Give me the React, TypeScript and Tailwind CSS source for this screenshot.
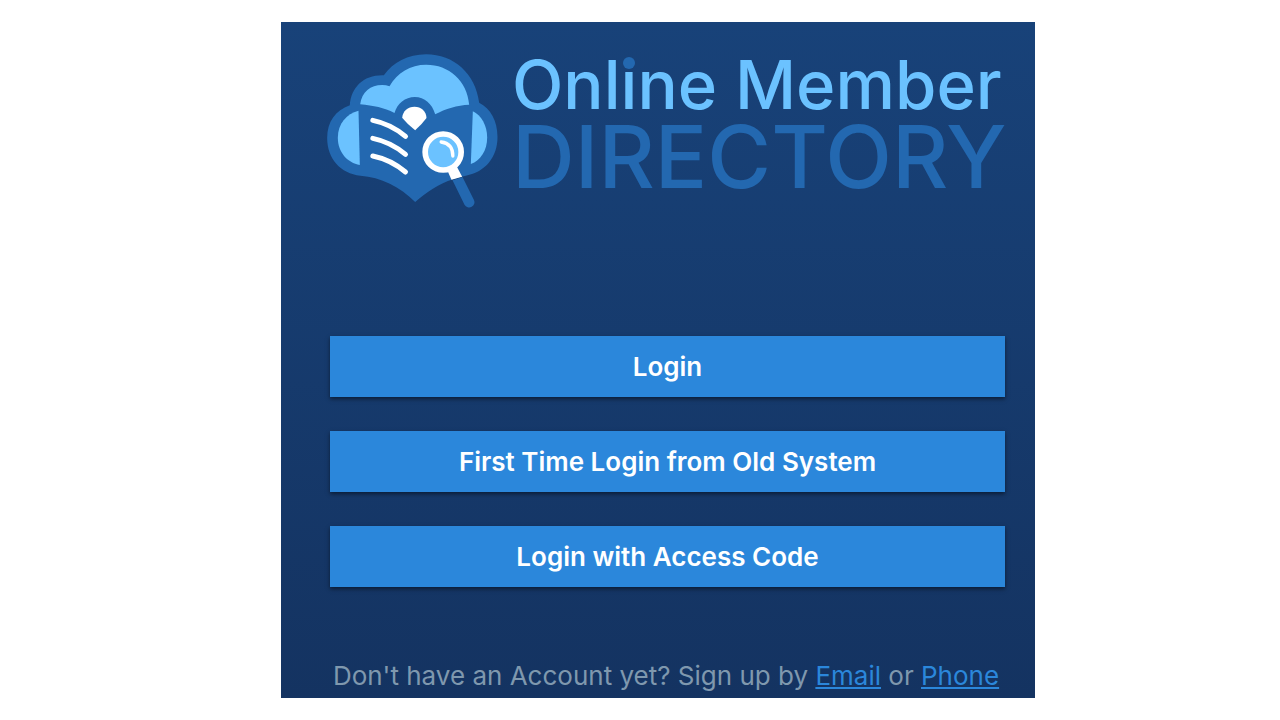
const actions = ["Login", "First Time Login from Old System", "Login with Access Code"];

function DirectoryMark() {
  return (
    <svg
      viewBox="20 26 512 462"
      className="h-[154px] w-[171px] shrink-0"
      role="img"
      aria-label="Directory logo"
    >
      <path
        fill="#2368b0"
        d="M88 180C92 125 130 88 190 90C217 52 262 27 317 27C400 27 465 85 476 172C510 190 531 225 531 275C531 335 495 380 436 391L420 395L398 402C355 415 320 440 284 470C240 425 180 395 120 391C60 385 20 340 20 278C20 230 45 195 88 180Z"
      />
      <g fill="#6bc2ff">
        <path d="M119 177C124 140 150 119 185 119Q197 119 207 123C230 82 270 58 317 58C385 58 440 105 446 178C410 180 375 190 344 207C335 175 312 155 283 155C254 155 230 175 222 203C190 187 160 181 119 177Z" />
        <path d="M114 196L118 359C80 352 52 320 52 277C52 235 78 205 114 196Z" />
        <path d="M457 198C482 210 500 240 500 277C500 315 480 345 451 356Z" />
      </g>
      <path
        fill="#fff"
        d="M245 217C247 197 262 184 282 184C302 184 317 197 318 218Q305 236 284 255Q262 238 245 217Z"
      />
      <g fill="none" stroke="#fff" strokeWidth="15" strokeLinecap="round">
        <path d="M157 225Q211 236 255 273" />
        <path d="M157 279Q211 290 255 327" />
        <path d="M157 332Q211 343 255 380" />
      </g>
      <path fill="#fff" d="M380 374L408 362L425 394L393 403Z" />
      <path fill="#2368b0" d="M396 405L426 395L460 463A15.500 15.500 0 0 1 432 478Z" />
      <circle cx="368" cy="320" r="54" fill="#6bc2ff" stroke="#fff" strokeWidth="17" />
      <path
        d="M362 290C385 293 397 308 397 332"
        fill="none"
        stroke="#fff"
        strokeWidth="10"
        strokeLinecap="round"
      />
    </svg>
  );
}

export default function App() {
  return (
    <div className="min-h-screen bg-white pt-[22px] pr-[245px] pb-[22px] pl-[281px] font-['Inter','Liberation_Sans',sans-serif]">
      <main className="overflow-hidden bg-linear-to-b from-[#184279] to-[#143361] pt-8 pr-[30px] pb-1 pl-[46px]">
        <header className="flex items-start gap-[14px]">
          <DirectoryMark />
          <h1 className="whitespace-nowrap font-medium">
            <span className="block text-[67px] leading-[62px] text-[#6bc2ff]">
              Onl
              <span className="relative">
                i
                <span className="absolute top-[13px] left-1/2 size-3 -translate-x-1/2 rounded-full bg-[#2368b0]" />
              </span>
              ne Member
            </span>
            <span className="block text-[87px] leading-[82px] text-[#2368b0]">DIRECTORY</span>
          </h1>
        </header>

        <div className="mt-[128px] flex flex-col gap-[34px] pl-[3px]">
          {actions.map((label) => (
            <button
              key={label}
              type="button"
              className="h-[61px] w-full bg-[#2b87db] text-[26px] font-semibold text-white shadow-[0_2px_4px_rgba(0,0,0,0.5)]"
            >
              {label}
            </button>
          ))}
        </div>

        <p className="mt-[71px] text-center text-[26px] leading-9 whitespace-nowrap text-[#7f98ae]">
          Don't have an Account yet? Sign up by{" "}
          <a href="#email" className="text-[#2b87db] underline">
            Email
          </a>{" "}
          or{" "}
          <a href="#phone" className="text-[#2b87db] underline">
            Phone
          </a>
        </p>
      </main>
    </div>
  );
}
